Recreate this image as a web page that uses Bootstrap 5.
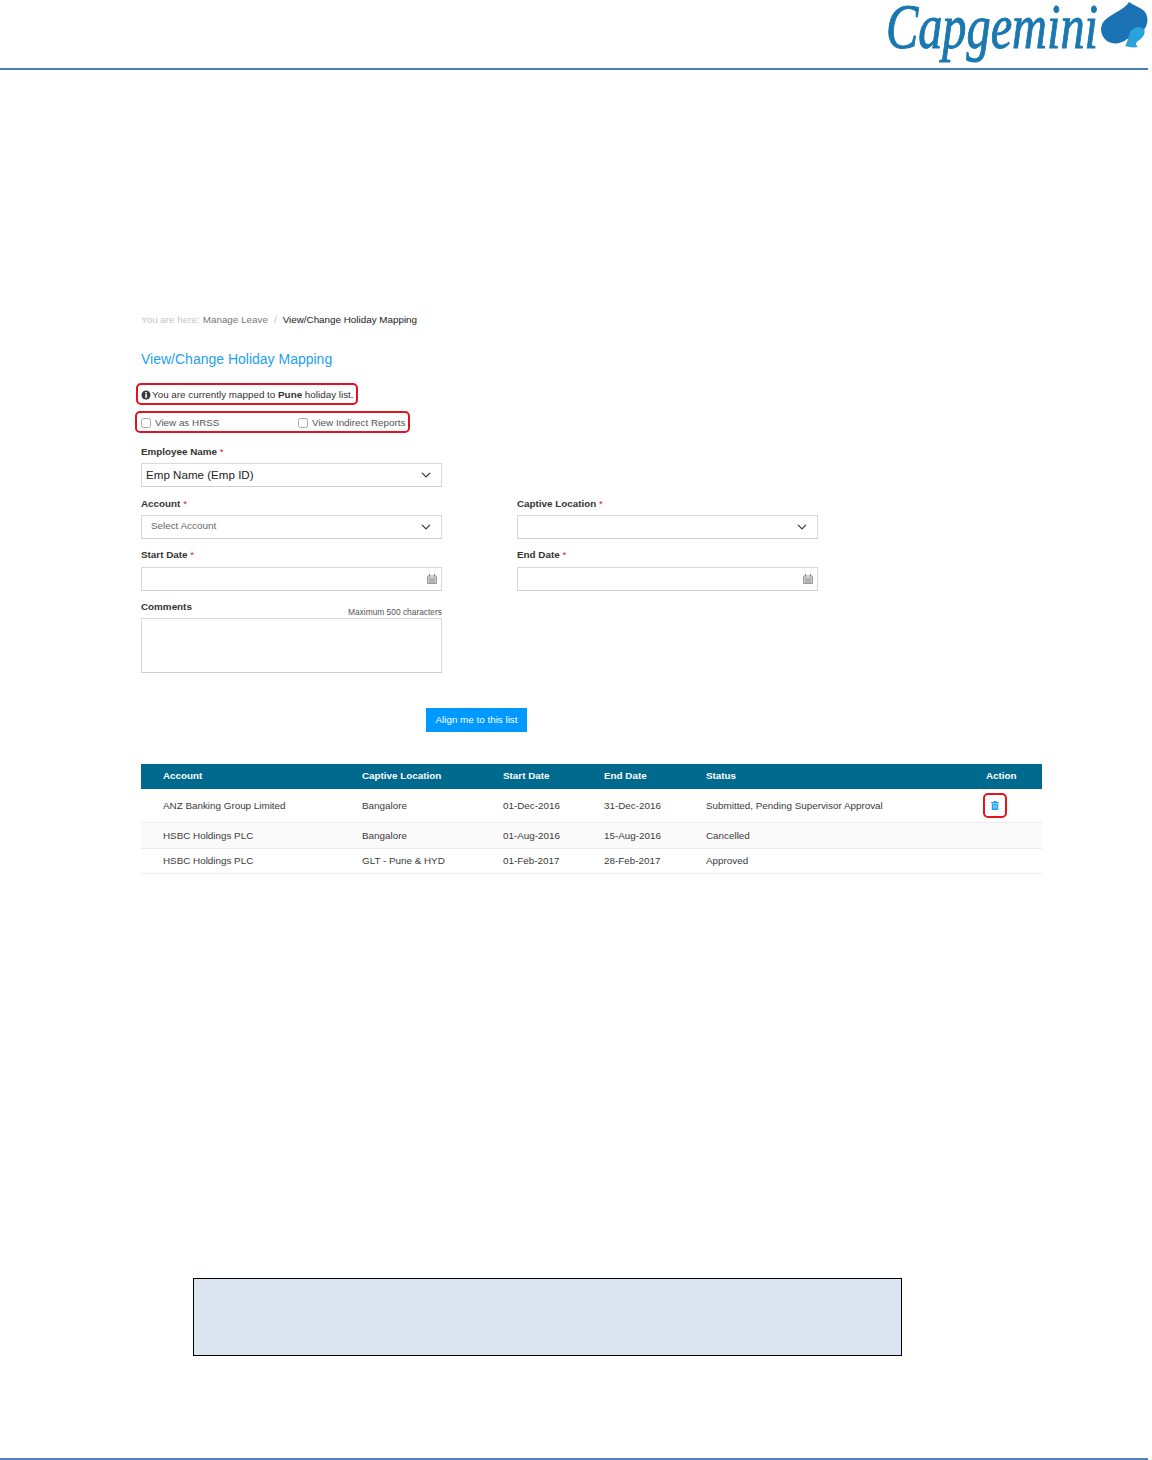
<!DOCTYPE html>
<html lang="en">
<head>
<meta charset="utf-8">
<title>View/Change Holiday Mapping</title>
<link href="https://cdn.jsdelivr.net/npm/bootstrap@5.3.0/dist/css/bootstrap.min.css" rel="stylesheet">
<style>
html,body{margin:0;background:#fff}
body{width:1152px;height:1460px;overflow:hidden;font-family:"Liberation Sans",Arial,sans-serif;font-size:9.85px;color:#3a3a3a;display:flex;flex-direction:column}
.doc-head{height:70px;width:1148px;border-bottom:2px solid #4a7ebb;flex:none;justify-content:flex-end}
.logo-word{width:214px;height:66px;flex:none;overflow:visible;margin-right:1px}
.logo-word text{font-family:"Liberation Serif",serif;font-style:italic;font-size:64px;fill:#1a78b0;stroke:#1a78b0;stroke-width:1px}
.logo-spade{width:48px;height:50px;flex:none}
.app-area{margin:243px 0 0 141px;width:901px;flex:none}
.crumbs{margin:0;font-size:9.85px;line-height:14px;--bs-breadcrumb-divider:'/';--bs-breadcrumb-item-padding-x:6px;--bs-breadcrumb-margin-bottom:0}
.crumb-here{color:#c6c6c6;margin-right:3px}
.crumbs .breadcrumb-item{color:#777}
.crumbs .breadcrumb-item.active{color:#222}
.crumbs .breadcrumb-item+.breadcrumb-item::before{color:#bbb}
.page-title{font-size:14px;line-height:18px;font-weight:400;color:#1e9ff2;margin:22px 0 0}
.mark-box{border:2px solid #e3141f;border-radius:5px;background:#fff;color:#333}
.notice{margin:15px 0 0 -5px;width:222px;height:22px;padding-left:3px;gap:1px;white-space:nowrap}
.notice svg{flex:none;margin-top:2px}
.notice span,.checks span{padding-top:4px}
.checks{margin:6px 0 0 -6px;width:275px;height:22px;padding-left:4px;white-space:nowrap;color:#555}
.chk{width:10px;height:10px;margin:2px 0 0;border:1px solid #aaa;border-radius:0;flex:none}
.chk-one{width:157px;gap:4px}
.chk-two{gap:4px}
.fld-row{display:grid;grid-template-columns:301px 301px;column-gap:75px}
.fld-label{font-size:9.85px;line-height:12px;font-weight:700;color:#333;margin:0;display:block}
.req{color:#e3141f;font-weight:400}
.box{height:24px;border:1px solid #d9d9d9;border-bottom-color:#cfcfcf;border-radius:0;font-size:9.85px;color:#666;padding:0 24px 0 9px;background-color:#fff;min-height:0;box-shadow:none}
select.box{background-size:12px 10px;background-position:right 9px center}
.box-emp{font-size:11.6px;color:#222;padding-left:4px}
.blank-select{padding-left:9px}
.cal{position:absolute;right:5px;top:7px;width:10px;height:10px}
.comment-box{height:55px;resize:none;padding:4px 9px}
.limit{font-size:8.4px;line-height:10px;color:#555;margin-bottom:1px}
.go-btn{--bs-btn-bg:#0099ff;--bs-btn-border-color:#0099ff;--bs-btn-color:#fff;--bs-btn-hover-bg:#0099ff;--bs-btn-hover-border-color:#0099ff;--bs-btn-hover-color:#fff;font-size:9.85px;width:101px;height:24px;padding:0;border-radius:0;line-height:22px}
.map-table{table-layout:fixed;width:901px;margin:32px 0 0;font-size:9.85px;--bs-table-bg:transparent;--bs-table-color:#3a3a3a;border-color:#eee}
.map-table th{background:#006a8e;color:#fff;font-weight:700;height:25px;padding:1px 0 0;vertical-align:middle;border:0}
.map-table td{padding:1px 0 0;vertical-align:middle;border-bottom:1px solid #ececec}
.map-table th:first-child,.map-table td:first-child{padding-left:22px}
.row-a td{height:34px}
.row-a td:last-child{padding-top:0}
.row-b td{height:26px;background:#fafafa}
.row-c td{height:25px}
.trash-box{width:24px;height:25px;margin-left:-3px;display:flex;align-items:center;justify-content:center}
.blue-note{margin:404px 0 0 193px;width:709px;height:78px;background:#dbe5f1;border:1px solid #000;flex:none}
.doc-foot{margin-top:102px;width:1148px;height:2px;background:#4f81bd;flex:none}
.lab-first{margin-top:13px;margin-bottom:5px}
.lab-next{margin-top:11px;margin-bottom:5px}
.lab-date{margin-top:10px;margin-bottom:6px}
.comments-head{margin-top:10px}
.comments-head .fld-label{margin-bottom:5px}
.btn-line{margin:35px 0 0 285px}
</style>
</head>
<body>
<header class="doc-head d-flex align-items-start">
  <svg class="logo-word" viewBox="0 0 214 66" role="img" aria-label="Capgemini"><text x="1" y="48" textLength="212" lengthAdjust="spacingAndGlyphs">Capgemini</text></svg>
  <svg class="logo-spade" viewBox="0 0 48 50" aria-hidden="true">
    <path fill="#1b72b4" d="M29 2C25 9 13 13 5 20C-1 26 0 36 7 41C13 45 21 44 27 39L34 36L42 32C48 26 49 18 45 12C41 7 34 6 29 2Z"/>
    <path fill="#2aa3dc" d="M25 46C28 42 28 36 31 31C34 27 40 26 44 29C46 33 43 38 38 41C35 43 36 45 38 47C33 48 29 47 25 46Z"/>
  </svg>
</header>

<main class="app-area">
  <div class="d-flex align-items-center">
    <span class="crumb-here">You are here:</span>
    <ol class="breadcrumb crumbs">
      <li class="breadcrumb-item">Manage Leave</li>
      <li class="breadcrumb-item active">View/Change Holiday Mapping</li>
    </ol>
  </div>
  <h1 class="page-title">View/Change Holiday Mapping</h1>

  <div class="mark-box notice d-flex align-items-center">
    <svg width="10" height="10" viewBox="0 0 10 10" aria-hidden="true"><circle cx="5" cy="5" r="4.500" fill="#3a3a3a"/><rect x="4.200" y="4.200" width="1.700" height="3.600" fill="#fff"/><rect x="4.200" y="2" width="1.700" height="1.500" fill="#fff"/></svg>
    <span>You are currently mapped to <b>Pune</b> holiday list.</span>
  </div>
  <div class="mark-box checks d-flex align-items-center">
    <label class="chk-one d-flex align-items-center"><input class="form-check-input chk" type="checkbox"><span>View as HRSS</span></label>
    <label class="chk-two d-flex align-items-center"><input class="form-check-input chk" type="checkbox"><span>View Indirect Reports</span></label>
  </div>

  <form>
    <div class="fld-row">
      <div>
        <label class="fld-label lab-first">Employee Name <span class="req">*</span></label>
        <select class="form-select box box-emp"><option>Emp Name (Emp ID)</option></select>
      </div>
    </div>
    <div class="fld-row">
      <div>
        <label class="fld-label lab-next">Account <span class="req">*</span></label>
        <select class="form-select box"><option>Select Account</option></select>
      </div>
      <div>
        <label class="fld-label lab-next">Captive Location <span class="req">*</span></label>
        <select class="form-select box blank-select"><option></option></select>
      </div>
    </div>
    <div class="fld-row">
      <div>
        <label class="fld-label lab-date">Start Date <span class="req">*</span></label>
        <div class="position-relative"><input class="form-control box" type="text">
          <svg class="cal" viewBox="0 0 10 10" aria-hidden="true"><path fill="none" stroke="#999" d="M.5 2h9v7.500h-9zM.5 4h9M3 4v5.500M5 4v5.500M7 4v5.500M.5 6h9M.5 8h9"/><path stroke="#888" d="M2.500 0v2.500M7.500 0v2.500"/></svg></div>
      </div>
      <div>
        <label class="fld-label lab-date">End Date <span class="req">*</span></label>
        <div class="position-relative"><input class="form-control box" type="text">
          <svg class="cal" viewBox="0 0 10 10" aria-hidden="true"><path fill="none" stroke="#999" d="M.5 2h9v7.500h-9zM.5 4h9M3 4v5.500M5 4v5.500M7 4v5.500M.5 6h9M.5 8h9"/><path stroke="#888" d="M2.500 0v2.500M7.500 0v2.500"/></svg></div>
      </div>
    </div>
    <div class="fld-row">
      <div>
        <div class="d-flex justify-content-between align-items-end comments-head">
          <label class="fld-label">Comments</label>
          <span class="limit">Maximum 500 characters</span>
        </div>
        <textarea class="form-control box comment-box"></textarea>
      </div>
    </div>
    <div class="btn-line"><button type="button" class="btn btn-primary go-btn">Align me to this list</button></div>
  </form>

  <table class="table map-table">
    <colgroup><col style="width:221px"><col style="width:141px"><col style="width:101px"><col style="width:102px"><col style="width:280px"><col style="width:56px"></colgroup>
    <thead><tr><th>Account</th><th>Captive Location</th><th>Start Date</th><th>End Date</th><th>Status</th><th>Action</th></tr></thead>
    <tbody>
      <tr class="row-a"><td>ANZ Banking Group Limited</td><td>Bangalore</td><td>01-Dec-2016</td><td>31-Dec-2016</td><td>Submitted, Pending Supervisor Approval</td>
        <td><div class="mark-box trash-box"><svg width="8" height="9" viewBox="0 0 8 9" aria-hidden="true"><path fill="#1e9ff2" d="M2.500 0h3v1H8v1H0V1h2.500zM.8 2.600h6.400V9H.8z"/><path stroke="#bfe4ff" stroke-width=".7" d="M2.700 3.600v4M4 3.600v4M5.300 3.600v4"/></svg></div></td></tr>
      <tr class="row-b"><td>HSBC Holdings PLC</td><td>Bangalore</td><td>01-Aug-2016</td><td>15-Aug-2016</td><td>Cancelled</td><td></td></tr>
      <tr class="row-c"><td>HSBC Holdings PLC</td><td>GLT - Pune &amp; HYD</td><td>01-Feb-2017</td><td>28-Feb-2017</td><td>Approved</td><td></td></tr>
    </tbody>
  </table>
</main>

<div class="blue-note"></div>
<div class="doc-foot"></div>
<script src="https://cdn.jsdelivr.net/npm/bootstrap@5.3.0/dist/js/bootstrap.bundle.min.js"></script>
</body>
</html>
